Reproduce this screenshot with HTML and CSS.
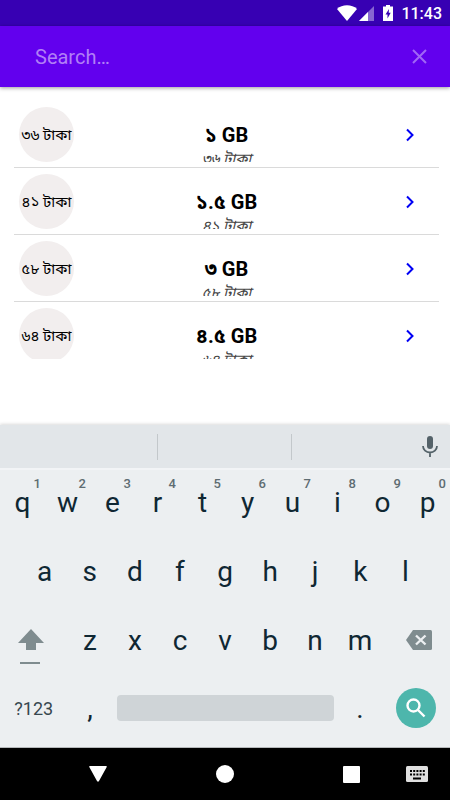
FILE: index.html
```html
<!DOCTYPE html>
<html lang="bn">
<head>
    <meta charset="UTF-8">
    <meta name="viewport" content="width=device-width, initial-scale=1.0">
    <title>Internet Packs</title>
    <link rel="stylesheet" href="styles.css">
</head>
<body>
    <div class="status-bar">
        <svg class="wifi" viewBox="0 0 20 16"><path d="M10 16 0 4C5-1 15-1 20 4Z" fill="#fff"/></svg>
        <svg class="signal" viewBox="0 0 15 15"><path d="M15 0V15H0Z" fill="#fff" opacity=".4"/><path d="M9 6V15H0Z" fill="#fff"/></svg>
        <svg class="battery" viewBox="0 0 10 16"><path d="M3 0h4v1.500h3V16H0V1.500h3Z" fill="#fff"/><path d="M6 4 2.500 9.500H4.500V13.500L7.700 7.700H5.700Z" fill="#3700b3"/></svg>
        <span>11:43</span>
    </div>

    <header class="search-bar">
        <input type="text" class="search-input" placeholder="Search…" aria-label="Search">
        <button class="clear-btn" aria-label="Clear">
            <svg viewBox="0 0 15 15"><path d="M1 1 14 14M14 1 1 14"/></svg>
        </button>
    </header>

    <main class="pack-list">
        <a href="#" class="pack">
            <span class="price">৩৬ টাকা</span>
            <span class="info"><b>১ GB</b><i>৩৬ টাকা</i></span>
            <svg class="arrow" viewBox="0 0 8 12"><path d="M1 .5 6.500 6 1 11.500"/></svg>
        </a>
        <a href="#" class="pack">
            <span class="price">৪১ টাকা</span>
            <span class="info"><b>১.৫ GB</b><i>৪১ টাকা</i></span>
            <svg class="arrow" viewBox="0 0 8 12"><path d="M1 .5 6.500 6 1 11.500"/></svg>
        </a>
        <a href="#" class="pack">
            <span class="price">৫৮ টাকা</span>
            <span class="info"><b>৩ GB</b><i>৫৮ টাকা</i></span>
            <svg class="arrow" viewBox="0 0 8 12"><path d="M1 .5 6.500 6 1 11.500"/></svg>
        </a>
        <a href="#" class="pack">
            <span class="price">৬৪ টাকা</span>
            <span class="info"><b>৪.৫ GB</b><i>৬৪ টাকা</i></span>
            <svg class="arrow" viewBox="0 0 8 12"><path d="M1 .5 6.500 6 1 11.500"/></svg>
        </a>
    </main>

    <section class="keyboard">
        <div class="suggestions">
            <span class="slot"></span>
            <span class="slot"></span>
            <span class="slot last"></span>
            <button class="mic" aria-label="Voice input">
                <svg viewBox="0 0 16 22"><rect x="5" y="0" width="6" height="13" rx="3" fill="#546269"/><path d="M1 10a7 6.500 0 0 0 14 0M8 16.500V21" fill="none" stroke="#546269" stroke-width="1.800"/></svg>
            </button>
        </div>
        <div class="keys">
            <div class="row">
                <button class="key">q<sup>1</sup></button>
                <button class="key">w<sup>2</sup></button>
                <button class="key">e<sup>3</sup></button>
                <button class="key">r<sup>4</sup></button>
                <button class="key">t<sup>5</sup></button>
                <button class="key">y<sup>6</sup></button>
                <button class="key">u<sup>7</sup></button>
                <button class="key">i<sup>8</sup></button>
                <button class="key">o<sup>9</sup></button>
                <button class="key">p<sup>0</sup></button>
            </div>
            <div class="row inset">
                <button class="key">a</button>
                <button class="key">s</button>
                <button class="key">d</button>
                <button class="key">f</button>
                <button class="key">g</button>
                <button class="key">h</button>
                <button class="key">j</button>
                <button class="key">k</button>
                <button class="key">l</button>
            </div>
            <div class="row">
                <button class="key wide" aria-label="Shift">
                    <svg class="shift" viewBox="0 0 32 48"><path d="M13 12 26 26H18V33H8V26H0Z"/><path d="M2 45H22V47H2Z"/></svg>
                </button>
                <button class="key">z</button>
                <button class="key">x</button>
                <button class="key">c</button>
                <button class="key">v</button>
                <button class="key">b</button>
                <button class="key">n</button>
                <button class="key">m</button>
                <button class="key wide" aria-label="Backspace">
                    <svg class="backspace" viewBox="-5 0 31 22"><path d="M7 0H24.500Q26 0 26 1.500V18.500Q26 20 24.500 20H7L0 10Z"/><path d="M10 5.500 19.500 14.500M19.500 5.500 10 14.500" stroke="#eceff1" stroke-width="2.400"/></svg>
                </button>
            </div>
            <div class="row bottom">
                <button class="key wide symbols">?123</button>
                <button class="key">,</button>
                <button class="key space" aria-label="Space"><span class="space-bar"></span></button>
                <button class="key">.</button>
                <button class="key wide" aria-label="Search">
                    <span class="go"><svg viewBox="0 0 20 20"><circle cx="7.500" cy="7.500" r="6"/><path d="M12 12 18.500 18.500"/></svg></span>
                </button>
            </div>
        </div>
    </section>

    <nav class="nav-bar">
        <div class="nav-main">
            <button aria-label="Back"><svg class="back" viewBox="0 0 18 16"><path d="M1 0H17Q18.300 0 17.600 1.200L10 15Q9 16.500 8 15L.4 1.200Q-.3 0 1 0Z"/></svg></button>
            <button aria-label="Home"><svg class="home" viewBox="0 0 18 18"><circle cx="9" cy="9" r="9"/></svg></button>
            <button aria-label="Recent apps"><svg class="recent" viewBox="0 0 17 17"><rect width="17" height="17" rx="1"/></svg></button>
        </div>
        <button aria-label="Switch keyboard">
            <svg class="switcher" viewBox="0 0 22 16"><rect width="22" height="16" rx="1.500" fill="#e0e0e0"/><path d="M4 5H19M4 8.500H19" stroke="#000" stroke-width="2" stroke-dasharray="2 1.200"/><path d="M7 12.500H15" stroke="#000" stroke-width="2"/></svg>
        </button>
    </nav>
</body>
</html>
```
FILE: styles.css
```css
:root {
    --primary: #6200ee;
    --primary-dark: #3700b3;
    --key-bg: #eceff1;
    --key-text: #0f2733;
    --key-icon: #7f8c8f;
}

* {
    box-sizing: border-box;
}

body {
    font-family: Roboto, "Noto Sans Bengali", "Noto Sans", sans-serif;
    background: #fff;
    height: 100vh;
    margin: 0;
    display: flex;
    flex-direction: column;
    overflow: hidden;
}

button {
    border: none;
    background: none;
    padding: 0;
    font: inherit;
    color: inherit;
    cursor: pointer;
}

svg {
    display: block;
}

/* status bar */
.status-bar {
    height: 26px;
    background: var(--primary-dark);
    color: #fff;
    font-size: 16px;
    font-weight: 500;
    display: flex;
    align-items: center;
    justify-content: flex-end;
    padding: 0 8px;
}

.wifi {
    width: 20px;
    height: 16px;
    margin-right: 2px;
}

.signal {
    width: 15px;
    height: 15px;
    margin-right: 9px;
}

.battery {
    width: 10px;
    height: 16px;
    margin-right: 8px;
}

/* search */
.search-bar {
    height: 61px;
    background: var(--primary);
    display: flex;
    align-items: center;
    padding: 0 23px 0 35px;
    box-shadow: 0 1px 4px rgba(0,0,0,0.4);
}

.search-input {
    flex: 1;
    min-width: 0;
    border: none;
    outline: none;
    padding: 0;
    background: none;
    color: #fff;
    font-family: inherit;
    font-size: 20px;
}

.search-input::placeholder {
    color: #b17ff6;
}

.clear-btn svg {
    width: 15px;
    height: 15px;
    fill: none;
    stroke: #a066f5;
    stroke-width: 2;
}

/* list */
.pack-list {
    flex: 1;
    min-height: 0;
    overflow: hidden;
    margin: 20px 11px 66px 14px;
}

.pack {
    display: flex;
    align-items: center;
    height: 61px;
    margin-bottom: 6px;
    padding: 0 25px 5px 5px;
    border-bottom: 1px solid #dadada;
    color: #000;
    text-decoration: none;
}

.price {
    width: 55px;
    height: 55px;
    padding-top: 2px;
    border-radius: 50%;
    background: #f2eeee;
    font-size: 15px;
    white-space: nowrap;
    display: flex;
    align-items: center;
    justify-content: center;
}

.info {
    flex: 1;
    height: 55px;
    overflow: hidden;
    padding-top: 16px;
    display: flex;
    flex-direction: column;
    align-items: center;
}

.info b {
    font-size: 20px;
    line-height: 24px;
    flex-shrink: 0;
}

.info i {
    font-size: 15px;
    line-height: 24px;
    flex-shrink: 0;
    color: #444;
}

.arrow {
    width: 8px;
    height: 12px;
    margin-left: 27px;
    fill: none;
    stroke: #0000f5;
    stroke-width: 2;
    overflow: visible;
}

/* keyboard */
.keyboard {
    background: var(--key-bg);
    color: var(--key-text);
    border-bottom: 1px solid #b5b8ba;
    box-shadow: 0 -1px 3px rgba(0,0,0,0.15);
}

.suggestions {
    height: 43px;
    display: flex;
    align-items: center;
    background: #e2e6e9;
    padding-left: 24px;
}

.slot {
    flex: 9;
    height: 26px;
}

.slot.last {
    flex: 8;
}

.slot + .slot {
    border-left: 1px solid #c3c8cb;
}

.mic {
    width: 40px;
    display: flex;
    justify-content: center;
}

.mic svg {
    width: 16px;
    height: 22px;
}

.keys {
    padding-bottom: 6px;
    box-shadow: inset 0 2px #f2f4f6;
}

.row {
    display: flex;
    height: 69px;
}

.row.bottom {
    height: 66px;
}

.inset {
    padding: 0 22px;
}

.key {
    position: relative;
    flex: 2 1 0;
    min-width: 0;
    font-size: 28px;
    display: flex;
    align-items: center;
    justify-content: center;
}

.key sup {
    position: absolute;
    top: 8px;
    right: 4px;
    font-size: 13px;
    line-height: 16px;
    font-weight: 500;
    color: #5e6c72;
}

.wide {
    flex-grow: 3;
}

.symbols {
    font-size: 18px;
    color: #37474f;
}

.space {
    flex-grow: 10;
}

.space-bar {
    flex: 1;
    height: 26px;
    margin: 0 4px;
    border-radius: 4px;
    background: #cfd4d7;
}

.shift {
    width: 32px;
    height: 48px;
    fill: var(--key-icon);
}

.backspace {
    width: 31px;
    height: 22px;
    fill: var(--key-icon);
}

.go {
    width: 40px;
    height: 40px;
    border-radius: 50%;
    background: #4db6ac;
    display: flex;
    align-items: center;
    justify-content: center;
}

.go svg {
    width: 20px;
    height: 20px;
    fill: none;
    stroke: #fff;
    stroke-width: 2.4;
}

/* navigation */
.nav-bar {
    height: 52px;
    background: #000;
    display: flex;
    align-items: center;
    padding: 0 22px 0 89px;
}

.nav-main {
    flex: 1;
    display: flex;
    align-items: center;
    justify-content: space-between;
    margin-right: 46px;
}

.nav-bar svg {
    fill: #fff;
}

.back {
    width: 18px;
    height: 16px;
}

.home {
    width: 18px;
    height: 18px;
}

.recent {
    width: 17px;
    height: 17px;
}

.switcher {
    width: 22px;
    height: 16px;
}
```
